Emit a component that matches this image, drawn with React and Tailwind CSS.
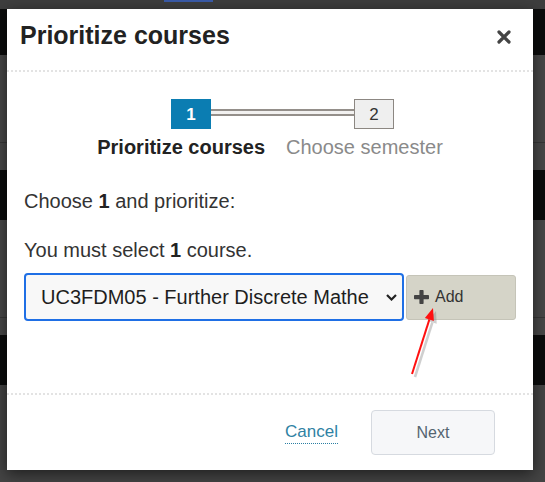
import React from "react";

function CloseIcon() {
  return (
    <svg width="14" height="14" viewBox="0 0 14 14">
      <path d="M2 2 L12 12 M12 2 L2 12" stroke="#444" strokeWidth="3.2" strokeLinecap="round" />
    </svg>
  );
}

function PlusIcon() {
  return (
    <svg width="15" height="14" viewBox="0 0 15 14">
      <rect x="0" y="5" width="15" height="4.2" rx="0.8" fill="#444" />
      <rect x="5.4" y="0" width="4.2" height="14" rx="0.8" fill="#444" />
    </svg>
  );
}

function Chevron() {
  return (
    <svg width="11" height="7" viewBox="0 0 11 7">
      <polyline points="1,1 5.5,5.5 10,1" fill="none" stroke="#222" strokeWidth="2.2" />
    </svg>
  );
}

export default function App() {
  const font = { fontFamily: '"Liberation Sans", Arial, sans-serif' };
  return (
    <div className="relative w-[545px] h-[482px] overflow-hidden bg-[#454545]" style={font}>
      {/* backdrop page */}
      <div className="flex h-full flex-col">
        <div className="h-[9px] bg-[#3e3e3e] pl-[164px]">
          <div className="h-[2px] w-[49px] bg-[#3a5ba8]" />
        </div>
        <div className="h-[46px] bg-[#0b0c0c]" />
        <div className="h-[87px] bg-[#474747]" />
        <div className="h-[1px] bg-[#363636]" />
        <div className="h-[27px] bg-[#474747]" />
        <div className="h-[50px] bg-[#0b0c0c]" />
        <div className="h-[97px] bg-[#474747]" />
        <div className="h-[1px] bg-[#363636]" />
        <div className="h-[17px] bg-[#474747]" />
        <div className="h-[50px] bg-[#0b0c0c]" />
        <div className="flex-1 bg-[#444444]" />
      </div>

      {/* modal */}
      <div className="absolute left-[7px] top-[9px] flex h-[461px] w-[526px] flex-col bg-white shadow-[0_4px_14px_rgba(0,0,0,0.55)]">
        <div className="flex h-[63px] shrink-0 items-start justify-between border-b-2 border-dotted border-[#e3e3e3] pl-[13px] pr-[22px] pt-[14px]">
          <h2 className="text-[25px] font-bold leading-none text-[#222]">Prioritize courses</h2>
          <button className="mt-[7px]">
            <CloseIcon />
          </button>
        </div>

        <div className="flex flex-1 flex-col px-[17px]">
          <div className="ml-[147px] mt-[27px] flex items-start">
            <div className="flex h-[30px] w-[40px] items-center justify-center bg-[#0b7db2] text-[17px] font-bold leading-none text-white">
              1
            </div>
            <div className="mt-[10px] h-[7px] w-[143px] border-y-2 border-[#948f8a] bg-[#f2f1f0]" />
            <div className="flex h-[30px] w-[40px] items-center justify-center border border-[#8c8782] bg-[#efefef] text-[17px] leading-none text-[#333]">
              2
            </div>
          </div>

          <div className="mt-[8px] flex justify-center gap-[21px] text-[20px] leading-none">
            <span className="font-bold text-[#222]">Prioritize courses</span>
            <span className="text-[#8a8a8a]">Choose semester</span>
          </div>

          <p className="mt-[34px] text-[20px] leading-none text-[#333]">
            Choose <b className="text-[#222]">1</b> and prioritize:
          </p>
          <p className="mt-[29px] text-[20px] leading-none text-[#333]">
            You must select <b className="text-[#222]">1</b> course.
          </p>

          <div className="mt-[13px] flex items-center gap-[2px]">
            <div className="flex h-[48px] w-[380px] items-center rounded-[4px] border-2 border-[#1f6fe5] bg-[#f8f8f8] pl-[15px]">
              <span className="w-[329px] whitespace-nowrap text-[20px] leading-none text-[#1e1e1e]">
                UC3FDM05 - Further Discrete Mathe
              </span>
              <span className="ml-[16px] flex items-center">
                <Chevron />
              </span>
            </div>
            <button className="flex h-[45px] w-[110px] items-center gap-[6px] rounded-[3px] border border-[#c5c4b8] bg-[#d5d4c8] pl-[7px] text-[16px] leading-none text-[#333]">
              <PlusIcon />
              <span>Add</span>
            </button>
          </div>
        </div>

        <div className="flex h-[77px] shrink-0 items-center justify-end gap-[33px] border-t-2 border-dotted border-[#e3e3e3] pr-[38px]">
          <a className="mt-[2px] border-b border-dotted border-[#2b7fa3] pb-[3px] text-[17px] leading-none text-[#2f82a4]">
            Cancel
          </a>
          <button className="h-[45px] w-[124px] rounded-[4px] border border-[#d6dae0] bg-[#f6f7f9] text-[16px] leading-none text-[#546470]">
            Next
          </button>
        </div>
      </div>

      {/* red annotation arrow */}
      <svg className="pointer-events-none absolute left-0 top-0" width="545" height="482" viewBox="0 0 545 482">
        <g transform="translate(3 3)" opacity="0.35">
          <line x1="412" y1="374" x2="429.4" y2="319.4" stroke="#777" strokeWidth="2.5" />
          <polygon points="433,308 433.7,320.8 425.1,318" fill="#777" />
        </g>
        <line x1="412" y1="374" x2="429.4" y2="319.4" stroke="#ff1010" strokeWidth="2" />
        <polygon points="433,308 433.9,321 424.9,318.1" fill="#ff1010" />
      </svg>
    </div>
  );
}
